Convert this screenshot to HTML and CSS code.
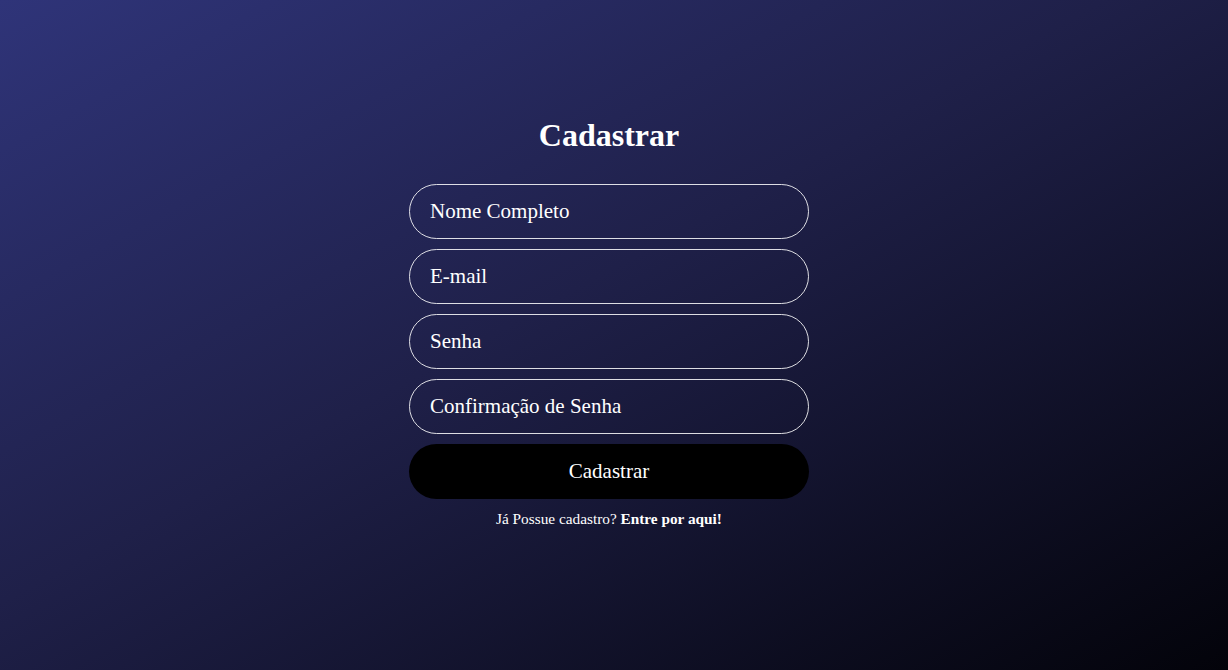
FILE: index.html
```html
<!DOCTYPE html>
<html lang="pt-BR">
<head>
<meta charset="utf-8">
<title>Cadastrar</title>
<link rel="stylesheet" href="styles.css">
</head>
<body>
<main class="page">
  <form class="form">
    <h1 class="title">Cadastrar</h1>
    <input class="field" type="text" placeholder="Nome Completo">
    <input class="field" type="email" placeholder="E-mail">
    <input class="field" type="password" placeholder="Senha">
    <input class="field" type="password" placeholder="Confirmação de Senha">
    <button class="submit" type="button">Cadastrar</button>
    <p class="footer">Já Possue cadastro? <a class="link" href="#">Entre por aqui!</a></p>
  </form>
</main>
</body>
</html>
```
FILE: styles.css
```css
html, body {
  margin: 0;
  padding: 0;
  height: 100%;
}
body {
  font-family: "Liberation Serif", "Times New Roman", serif;
  color: #fff;
  background: linear-gradient(to bottom right, #2f3479 0%, #1f2049 45%, #03030a 100%);
}
.page {
  min-height: 100vh;
  box-sizing: border-box;
  padding-top: 117px;
  padding-right: 10px;
  display: flex;
  justify-content: center;
}
.form {
  width: 400px;
  display: flex;
  flex-direction: column;
  gap: 10px;
}
.title {
  margin: 0 0 21px;
  font-size: 32px;
  line-height: 36px;
  font-weight: bold;
  text-align: center;
}
.field {
  height: 55px;
  box-sizing: border-box;
  border: 1px solid rgba(255,255,255,0.85);
  border-radius: 28px;
  background: transparent;
  padding: 0 20px;
  font-family: inherit;
  font-size: 21px;
  color: #fff;
  outline: none;
}
.field::placeholder {
  color: #fff;
  opacity: 1;
}
.submit {
  height: 55px;
  border: none;
  border-radius: 28px;
  background: #000;
  color: #fff;
  font-family: inherit;
  font-size: 21px;
  cursor: pointer;
}
.footer {
  margin: 1px 0 0;
  font-size: 15.3px;
  line-height: 17px;
  text-align: center;
}
.link {
  color: #fff;
  font-weight: bold;
  text-decoration: none;
}
```
